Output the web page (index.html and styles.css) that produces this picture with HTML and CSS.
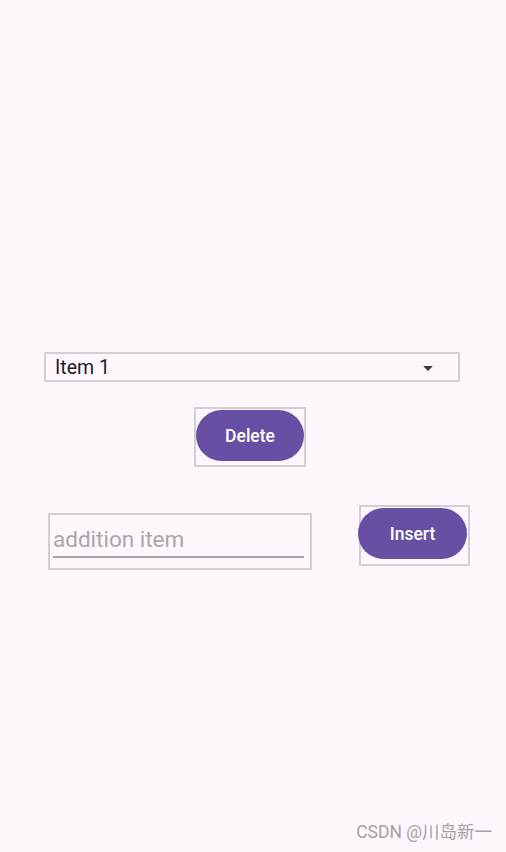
FILE: index.html
```html
<!DOCTYPE html>
<html>
<head>
<meta charset="utf-8">
<link rel="stylesheet" href="styles.css">
</head>
<body>
<div class="screen">
  <div class="spinner">
    <span class="spinner-text">Item 1</span>
    <span class="spinner-arrow"></span>
  </div>
  <div class="btn-bounds delete-bounds">
    <button class="pill">Delete</button>
  </div>
  <div class="row">
    <div class="edit-bounds">
      <div class="edit-field">addition item</div>
    </div>
    <div class="btn-bounds insert-bounds">
      <button class="pill insert-pill">Insert</button>
    </div>
  </div>
  <div class="watermark">CSDN @川岛新一</div>
</div>
</body>
</html>
```
FILE: styles.css
```css
* { box-sizing: border-box; }
html, body {
  margin: 0;
  padding: 0;
  background: #fdf7fd;
}
.screen {
  position: relative;
  width: 506px;
  height: 852px;
  padding-top: 352px;
  display: flex;
  flex-direction: column;
  align-items: flex-start;
  font-family: Roboto, "Noto Sans CJK SC", sans-serif;
}
.spinner {
  margin-left: 44px;
  width: 416px;
  height: 30px;
  border: 2px solid #d2ced2;
  display: flex;
  align-items: center;
  justify-content: space-between;
  padding: 1px 25px 0 9px;
}
.spinner-text {
  font-size: 19.5px;
  line-height: 25px;
  color: #1d1b20;
}
.spinner-arrow {
  width: 0;
  height: 0;
  border-left: 5px solid transparent;
  border-right: 5px solid transparent;
  border-top: 5px solid #3a383c;
  margin-top: 1px;
}
.btn-bounds {
  border: 2px solid #d2ced2;
  display: flex;
  justify-content: center;
  align-items: flex-start;
  padding-top: 1px;
}
.delete-bounds {
  margin-top: 25px;
  margin-left: 194px;
  width: 112px;
  height: 60px;
}
.pill {
  width: 108px;
  height: 51px;
  border: none;
  border-radius: 26px;
  background: #6750a4;
  color: #ffffff;
  font-family: Roboto, sans-serif;
  font-size: 17.5px;
  font-weight: 500;
  padding: 0;
}
.row {
  margin-top: 38px;
  display: flex;
  align-items: flex-start;
}
.edit-bounds {
  margin-top: 8px;
  margin-left: 48px;
  width: 264px;
  height: 57px;
  border: 2px solid #d2ced2;
  padding: 12px 0 0 3px;
}
.edit-field {
  width: 251px;
  font-size: 22.5px;
  line-height: 25px;
  color: #aaa6aa;
  padding-bottom: 4px;
  border-bottom: 2px solid #a8a2aa;
}
.insert-bounds {
  margin-left: 47px;
  width: 111px;
  height: 61px;
  justify-content: flex-start;
}
.insert-pill {
  width: 109px;
  margin-left: -3px;
}
.watermark {
  position: absolute;
  right: 14px;
  top: 820px;
  font-size: 17.5px;
  line-height: 24px;
  color: #a3a1a5;
}
```
